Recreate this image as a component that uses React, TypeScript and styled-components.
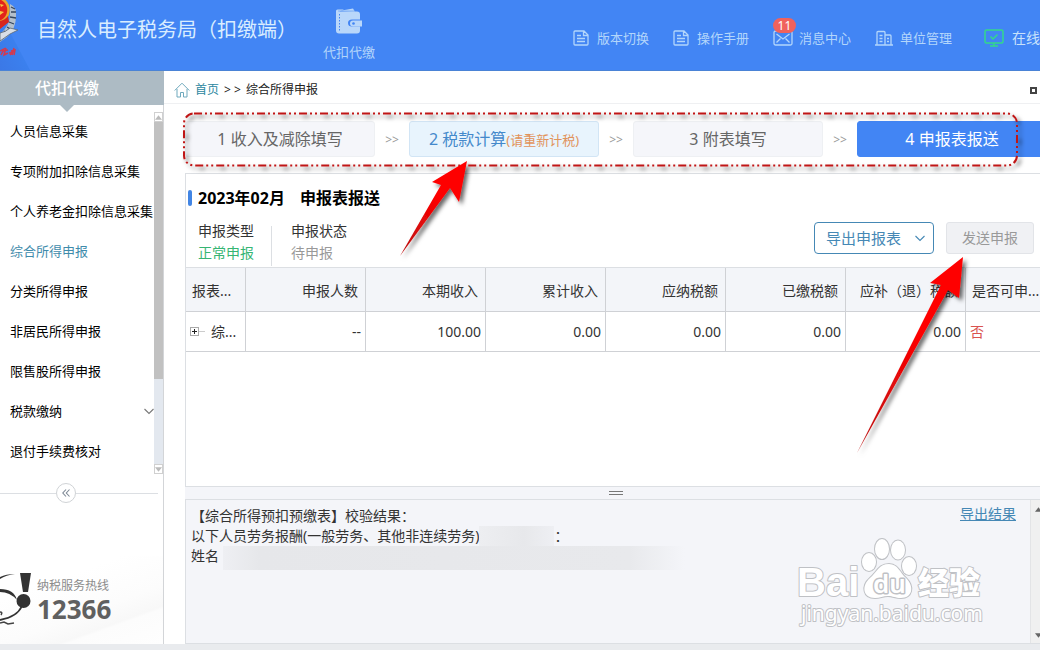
import React from "react";
import styled, { createGlobalStyle } from "styled-components";

const Global = createGlobalStyle`
  * { box-sizing: border-box; }
  body { margin: 0; overflow: hidden; background: #fff; }
  body, button, select {
    font-family: "Noto Sans", "Noto Sans CJK SC", sans-serif;
    font-size: 14px;
    line-height: 20px;
    color: #333;
  }
  ul, ol { list-style: none; margin: 0; padding: 0; }
  h1, h2, h3, p, dl, dd { margin: 0; font-weight: 400; }
  a { text-decoration: none; color: inherit; }
  button { padding: 0; border: 0; background: none; cursor: pointer; }
`;

const Page = styled.div`
  position: relative;
  display: flex;
  flex-direction: column;
  min-height: 100vh;
  overflow: hidden;
`;

/* ---------- top bar ---------- */
const TopBar = styled.header`
  display: flex;
  flex-shrink: 0;
  height: 71px;
  background: linear-gradient(62deg, #3b78e6 0, #3b80ee 26px, #4285f4 27px);
  border-bottom: 1px solid #4a83d6;
  color: #d9edff;
`;
const Emblem = styled.svg`
  width: 37px;
  height: 70px;
  flex-shrink: 0;
`;
const AppTitle = styled.h1`
  width: 273px;
  flex-shrink: 0;
  padding-top: 15px;
  font-size: 20px;
  line-height: 30px;
  white-space: nowrap;
`;
const ModuleTab = styled.button`
  display: flex;
  flex-direction: column;
  align-items: center;
  gap: 8px;
  width: 78px;
  padding-top: 8px;
  font-size: 13px;
  color: #b3d6fb;
`;
const TopLinks = styled.nav`
  display: flex;
  flex: 1;
  justify-content: flex-end;
  gap: 24px;
  padding-top: 28px;
`;
const TopLink = styled.a<{ $gap?: number }>`
  position: relative;
  display: flex;
  align-items: center;
  gap: ${(p) => p.$gap ?? 8}px;
  height: 20px;
  font-size: 13px;
  color: #b3d6fb;
  white-space: nowrap;
  svg { flex-shrink: 0; }
`;
const OnlineLink = styled(TopLink)`
  margin-left: 8px;
  font-size: 14px;
  color: #c8e2fb;
`;
const CountBadge = styled.span`
  position: absolute;
  left: 0;
  top: -10px;
  width: 23px;
  height: 15px;
  border-radius: 8px;
  background: #f0625d;
  color: #fff;
  font-size: 12px;
  line-height: 15px;
  text-align: center;
`;

/* ---------- sidebar ---------- */
const Body = styled.div`
  display: flex;
  flex: 1;
`;
const Sidebar = styled.aside`
  display: flex;
  flex-direction: column;
  flex-shrink: 0;
  width: 164px;
  border-right: 1px solid #d3d5d8;
`;
const SideTitle = styled.h2`
  height: 34px;
  margin-right: -1px;
  padding-right: 30px;
  background: #adbbc4;
  color: #fff;
  font-size: 16px;
  font-weight: 500;
  line-height: 34px;
  text-align: center;
`;
const TitlePointer = styled.div`
  width: 14px;
  height: 7px;
  margin-left: 60px;
  background: #adbbc4;
  clip-path: polygon(0 0, 100% 0, 50% 100%);
`;
const SideScroll = styled.div`
  display: flex;
  height: 362px;
`;
const Menu = styled.ul`
  flex: 1;
  min-width: 0;
`;
const MenuLink = styled.a<{ $active?: boolean }>`
  display: flex;
  align-items: center;
  justify-content: space-between;
  height: 40px;
  padding: 0 0 2px 10px;
  font-size: 13px;
  color: ${(p) => (p.$active ? "#3f8bab" : "#000")};
  white-space: nowrap;
`;
const SideTrack = styled.div`
  display: flex;
  flex-direction: column;
  width: 9px;
  background: #e3e8ef;
`;
const SideThumb = styled.div`
  flex: 0 0 257px;
  background: #c1c1c1;
`;
const TrackEnd = styled.div`
  display: grid;
  place-items: center;
  height: 10px;
  border: 1px solid #d0d0d0;
  background: #fff;
`;
const TrackSpace = styled.div`
  flex: 1;
`;
const CollapseRow = styled.div`
  display: flex;
  align-items: center;
  height: 20px;
  margin: 9px 5px 0 0;
  &::before, &::after {
    content: "";
    height: 1px;
    background: #dcdfe3;
    flex: 1;
  }
  &::before { flex: 0 0 56px; }
`;
const CollapseButton = styled.button`
  display: grid;
  place-items: center;
  width: 20px;
  height: 20px;
  border: 1px solid #d0d3d6;
  border-radius: 50%;
`;
const Hotline = styled.div`
  display: flex;
  align-items: center;
  height: 88px;
  margin-top: auto;
  background: linear-gradient(160deg, #fff 30%, #fcfcfc 60%, #f8f8f8 74%, #fcfcfc 76%, #fefefe);
`;
const HotlineText = styled.p`
  padding: 2px 0 0 6px;
  font-size: 12px;
  line-height: 16px;
  color: #8c8c8c;
`;
const HotlineNumber = styled.strong`
  display: block;
  color: #606060;
  font-size: 26px;
  line-height: 30px;
`;

/* ---------- main area ---------- */
const Main = styled.main`
  display: flex;
  flex-direction: column;
  flex: 1;
  min-width: 0;
`;
const Breadcrumb = styled.nav`
  display: flex;
  align-items: center;
  height: 33px;
  padding: 6px 3px 0 10px;
  border-bottom: 1px solid #eff0f2;
  font-size: 12px;
  color: #222;
  gap: 5px;
`;
const HomeLink = styled.a`
  display: flex;
  align-items: center;
  gap: 5px;
  color: #2b87a0;
`;
const RestoreButton = styled.button`
  width: 7px;
  height: 7px;
  margin-left: auto;
  border: 2px solid #444;
`;
const Steps = styled.ol`
  display: flex;
  height: 36px;
  margin: 17px 0 16px 21px;
`;
const StepItem = styled.li`
  display: flex;
  flex-shrink: 0;
  &:not(:last-child)::after {
    content: ">>";
    width: 34px;
    font-size: 12px;
    line-height: 38px;
    text-align: center;
    color: #999;
  }
`;
const stepTone = {
  plain: "background:#f5f6fa;color:#666;border-color:#eef0f3;",
  warn: "background:#e8f4fd;color:#4489cb;border-color:#d2e5f5;",
  active: "background:#4285f4;color:#fff;border-color:#4285f4;",
};
const StepButton = styled.button<{ $tone: keyof typeof stepTone }>`
  width: 190px;
  height: 36px;
  border: 1px solid;
  border-radius: 3px;
  font-size: 16px;
  white-space: nowrap;
  ${(p) => stepTone[p.$tone]}
`;
const StepHint = styled.span`
  font-size: 13px;
  color: #e1935b;
`;
const Report = styled.section`
  flex: 1;
  margin-left: 21px;
  border: solid #dcdfe3;
  border-width: 1px 0 1px 1px;
`;
const ReportTitle = styled.h2`
  display: flex;
  align-items: center;
  padding: 12px 0 0 2px;
  font-size: 16px;
  font-weight: 700;
  line-height: 24px;
  color: #000;
  &::before {
    content: "";
    width: 4px;
    height: 16px;
    margin-right: 6px;
    border-radius: 2px;
    background: #4285e4;
  }
`;
const ReportName = styled.span`
  margin-left: 15px;
`;
const ReportInfo = styled.div`
  display: flex;
  height: 57px;
  padding: 0 6px 0 12px;
`;
const InfoItem = styled.dl`
  margin: 16px 0 1px;
  padding-right: 17px;
  line-height: 22px;
  & + & {
    padding-left: 19px;
    border-left: 1px solid #dcdfe3;
  }
  dt { margin-top: -6px; }
`;
const InfoValue = styled.dd<{ $ok?: boolean }>`
  color: ${(p) => (p.$ok ? "#36b573" : "#999")};
`;
const Actions = styled.div`
  display: flex;
  gap: 12px;
  margin: 12px 0 0 auto;
  height: 32px;
`;
const SelectWrap = styled.label`
  position: relative;
  svg {
    position: absolute;
    right: 9px;
    top: 13px;
    pointer-events: none;
  }
`;
const ExportSelect = styled.select`
  appearance: none;
  width: 120px;
  height: 32px;
  padding: 0 11px;
  border: 1px solid #4588b5;
  border-radius: 4px;
  background: #fff;
  color: #4588b5;
  font-size: 15px;
`;
const SendButton = styled.button`
  width: 88px;
  height: 32px;
  border: 1px solid #e2e4e8;
  border-radius: 3px;
  background: #f0f1f4;
  color: #999;
`;
const Table = styled.table`
  width: 100%;
  table-layout: fixed;
  border-collapse: separate;
  border-spacing: 0;
  border-top: 1px solid #dcdfe3;
`;
const HeadCell = styled.th<{ $left?: boolean }>`
  height: 44px;
  padding: ${(p) => (p.$left ? "2px 2px 0 6px" : "2px 7px 0 2px")};
  border: solid #cfd1d5;
  border-width: 0 1px 1px 0;
  background: #f3f5f9;
  font-weight: 400;
  text-align: ${(p) => (p.$left ? "left" : "right")};
  white-space: nowrap;
  &:last-child { border-right: 0; }
`;
const Cell = styled.td<{ $left?: boolean }>`
  height: 40px;
  padding: 0 4px;
  border: solid #cfd1d5;
  border-width: 0 1px 1px 0;
  text-align: ${(p) => (p.$left ? "left" : "right")};
  white-space: nowrap;
  &:last-child { border-right: 0; color: #d9534f; }
`;
const Expander = styled.span`
  display: flex;
  align-items: center;
  gap: 6px;
`;
const Splitter = styled.div`
  display: grid;
  place-items: center;
  height: 12px;
  margin-left: 21px;
  padding-left: 6px;
  background: #f4f5f9;
`;
const Grip = styled.span`
  width: 14px;
  height: 4px;
  border: solid #777;
  border-width: 1px 0;
`;
const Results = styled.section`
  position: relative;
  display: flex;
  height: 145px;
  margin-left: 21px;
  border: solid #dcdfe3;
  border-width: 1px 0 1px 1px;
  background: #f4f5f9;
`;
const ResultText = styled.div`
  flex: 1;
  padding: 6px 0 0 5px;
`;
const ResultLine = styled.p`
  display: flex;
  align-items: center;
  height: 20px;
  white-space: nowrap;
`;
const Masked = styled.span<{ $wide?: boolean }>`
  align-self: ${(p) => (p.$wide ? "flex-start" : "flex-end")};
  flex-shrink: 0;
  width: ${(p) => (p.$wide ? 462 : 75)}px;
  height: ${(p) => (p.$wide ? 24 : 20)}px;
  margin-left: ${(p) => (p.$wide ? 4 : 0)}px;
  background: ${(p) =>
    p.$wide
      ? "linear-gradient(90deg, #eeeff3, #e6e7ea 8%, #e8e9ec 88%, #f4f5f9)"
      : "linear-gradient(90deg, #edeef1, #e7e8eb 60%, #eeeff3)"};
`;
const ExportResults = styled.a`
  padding: 4px 14px 0 0;
  color: #4588b5;
  text-decoration: underline;
`;
const ResultTrack = styled.div`
  display: flex;
  flex-direction: column;
  justify-content: space-between;
  width: 10px;
  padding: 7px 0 5px 4px;
  border-left: 1px solid #e3e4e6;
  background: #f0f0f0;
  overflow: hidden;
  svg { flex-shrink: 0; }
`;
const Watermark = styled.svg`
  position: absolute;
  right: 50px;
  bottom: 8px;
  width: 194px;
  height: 98px;
`;
const Footer = styled.footer`
  height: 6px;
  background: #e9ebee;
`;
const Annotations = styled.svg`
  position: absolute;
  left: 0;
  top: 0;
  width: 1040px;
  height: 650px;
  pointer-events: none;
`;

const DocIcon = () => (
  <svg width="16" height="16" viewBox="0 0 16 16" fill="none" stroke="#b3d6fb" strokeWidth="1.3">
    <path d="M2 1h9l4 4v9a1 1 0 0 1-1 1H2a1 1 0 0 1-1-1V2a1 1 0 0 1 1-1zM10.500 1v4.500H15M4 5.500h4M4 8.500h8M4 11.500h8" />
  </svg>
);
const MailIcon = () => (
  <svg width="20" height="16" viewBox="0 0 20 16" fill="none" stroke="#b3d6fb" strokeWidth="1.3">
    <rect x="1" y="1" width="18" height="14" rx="1.500" />
    <path d="M3.500 4 10 9l6.500-5M3.500 12.500 7.500 8.500M16.500 12.500l-4-4" />
  </svg>
);
const BuildingIcon = () => (
  <svg width="18" height="16" viewBox="0 0 18 16" fill="none" stroke="#b3d6fb" strokeWidth="1.300">
    <path d="M0 15h18M2 15V2.500a1 1 0 0 1 1-1h6a1 1 0 0 1 1 1V15M10 5h5a1 1 0 0 1 1 1v9M4.500 5.500h3M4.500 8.500h3M4.500 11.500h3M12 8.500h2M12 11.500h2" />
  </svg>
);
const MonitorIcon = () => (
  <svg width="20" height="18" viewBox="0 0 20 18" fill="none" stroke="#33d98a" strokeWidth="1.500">
    <rect x="1" y="1" width="18" height="13" rx="1.500" />
    <path d="M6.500 7.500 9 10l4.500-4.500M10 14v3M6 17h8" />
  </svg>
);
const WalletIcon = () => (
  <svg width="26" height="26" viewBox="0 0 26 26">
    <path d="M3 3 17 .5 19 4z" fill="#b9d7fa" />
    <path d="M0 3q0-1.500 1.500-1.500H8L3 3.500h18q3 0 3 3v5h-8q-4 0-4 3.500t4 3.500h8v4q0 3-3 3H3q-3 0-3-3z" fill="#b9d7fa" />
    <path d="M17 12.500h9v6h-9q-3 0-3-3t3-3z" fill="#b9d7fa" />
    <circle cx="17.500" cy="15.500" r="1.300" fill="#4285f4" />
    <path d="M3.500 6v18" stroke="#4285f4" strokeDasharray="1.500 1.500" />
    <path d="M2 3h17" stroke="#6fa3f2" strokeWidth=".7" />
  </svg>
);
const Triangle = ({ down, dark }: { down?: boolean; dark?: boolean }) => (
  <svg width="7" height="5" viewBox="0 0 8 5">
    <path d={down ? "M0 0h8L4 5z" : "M0 5h8L4 0z"} fill={dark ? "#666" : "#bbb"} />
  </svg>
);
const Chevron = ({ color }: { color: string }) => (
  <svg width="10" height="7" viewBox="0 0 10 7" fill="none" stroke={color} strokeWidth="1.100">
    <path d="m.5 1 4.500 4.500L9.500 1" />
  </svg>
);

const menu = [
  "人员信息采集",
  "专项附加扣除信息采集",
  "个人养老金扣除信息采集",
  "综合所得申报",
  "分类所得申报",
  "非居民所得申报",
  "限售股所得申报",
  "税款缴纳",
  "退付手续费核对",
];
const columns = ["报表...", "申报人数", "本期收入", "累计收入", "应纳税额", "已缴税额", "应补（退）税额", "是否可申..."];
const values = ["--", "100.00", "0.00", "0.00", "0.00", "0.00"];

export default function App() {
  return (
    <Page>
      <Global />
      <TopBar>
        <Emblem viewBox="0 0 37 70" aria-hidden="true">
          <path d="M10 4q7 3 6 12 0 13-9 21l-7 5v-8q10-8 10-20z" fill="#b4bfcb" />
          <path d="M11 7l4 2M11 12l5 0M10 17l6 1M9 22l5 2M7 27l5 3M4 31l4 4M0 36l3 3" stroke="#34465e" strokeWidth="1.300" />
          <path d="M0 33q6-1 10-5l8 2-8 4-10 7z" fill="#d8dee6" stroke="#5b6775" strokeWidth=".8" />
          <circle cx="-4" cy="10" r="12.500" fill="#e3231b" stroke="#e9a72c" strokeWidth="2.500" />
          <path d="M0 4l4 1-3 2zM0 11l4 1-4 3z" fill="#f7c943" />
          <path d="M0 21q5-1 8-5l1 6-9 7z" fill="#d8271e" />
          <path d="M0 51l4-2-3 6M6 48l-2 7 4-2M3 51l5-1M9 53l4-1-3 3M14 48l-2 7M11 51l4-1-1 5" stroke="#d23a50" strokeWidth="1.500" fill="none" />
        </Emblem>
        <AppTitle>自然人电子税务局（扣缴端）</AppTitle>
        <ModuleTab>
          <WalletIcon />
          代扣代缴
        </ModuleTab>
        <TopLinks>
          <TopLink href="#"><DocIcon />版本切换</TopLink>
          <TopLink href="#"><DocIcon />操作手册</TopLink>
          <TopLink href="#" $gap={6}><MailIcon /><CountBadge>11</CountBadge>消息中心</TopLink>
          <TopLink href="#" $gap={7}><BuildingIcon />单位管理</TopLink>
          <OnlineLink href="#"><MonitorIcon />在线</OnlineLink>
        </TopLinks>
      </TopBar>
      <Body>
        <Sidebar>
          <SideTitle>代扣代缴</SideTitle>
          <TitlePointer />
          <SideScroll>
            <Menu>
              {menu.map((m) => (
                <li key={m}>
                  <MenuLink href="#" $active={m === "综合所得申报"}>
                    {m}
                    {m === "税款缴纳" && <Chevron color="#777" />}
                  </MenuLink>
                </li>
              ))}
            </Menu>
            <SideTrack>
              <TrackEnd><Triangle /></TrackEnd>
              <SideThumb />
              <TrackSpace />
              <TrackEnd><Triangle down /></TrackEnd>
            </SideTrack>
          </SideScroll>
          <CollapseRow>
            <CollapseButton aria-label="收起">
              <svg width="8" height="8" viewBox="0 0 8 8" fill="none" stroke="#7c8794" strokeWidth="1.100">
                <path d="M4 .5.8 4 4 7.500M7.500.5 4.300 4l3.200 3.500" />
              </svg>
            </CollapseButton>
          </CollapseRow>
          <Hotline>
            <svg width="31" height="54" viewBox="0 0 31 54" aria-hidden="true">
              <path d="M20 0h11l-3 19h-5z" fill="#333" />
              <circle cx="23.500" cy="28" r="7" fill="#333" />
              <path d="M0 4Q6 1 15 1 6 2 0 6zM0 16q14 0 17 11-7-8-17-8z" fill="#333" />
              <path d="M22 33q-5 11-22 14" fill="none" stroke="#333" strokeWidth="1.800" />
              <path d="M0 39q3 0 1 3M0 50l4-1 4 2 6-1" fill="none" stroke="#444" strokeWidth="1.500" />
            </svg>
            <HotlineText>
              纳税服务热线
              <HotlineNumber>12366</HotlineNumber>
            </HotlineText>
          </Hotline>
        </Sidebar>
        <Main>
          <Breadcrumb>
            <HomeLink href="#">
              <svg width="16" height="16" viewBox="0 0 16 16" fill="none" stroke="#6fa9bd" strokeWidth="1">
                <path d="M.7 8.500 8 1.200l7.300 7.300M3 7v8h3.500v-4.500h3V15H13V7" />
              </svg>
              首页
            </HomeLink>
            <span>&gt; &gt;</span>
            <span>综合所得申报</span>
            <RestoreButton aria-label="还原" />
          </Breadcrumb>
          <Steps>
            <StepItem><StepButton $tone="plain">1 收入及减除填写</StepButton></StepItem>
            <StepItem>
              <StepButton $tone="warn">2 税款计算<StepHint>(请重新计税)</StepHint></StepButton>
            </StepItem>
            <StepItem><StepButton $tone="plain">3 附表填写</StepButton></StepItem>
            <StepItem><StepButton $tone="active">4 申报表报送</StepButton></StepItem>
          </Steps>
          <Report>
            <ReportTitle>
              2023年02月<ReportName>申报表报送</ReportName>
            </ReportTitle>
            <ReportInfo>
              <InfoItem>
                <dt>申报类型</dt>
                <InfoValue $ok>正常申报</InfoValue>
              </InfoItem>
              <InfoItem>
                <dt>申报状态</dt>
                <InfoValue>待申报</InfoValue>
              </InfoItem>
              <Actions>
                <SelectWrap>
                  <ExportSelect aria-label="导出申报表">
                    <option>导出申报表</option>
                  </ExportSelect>
                  <Chevron color="#4588b5" />
                </SelectWrap>
                <SendButton disabled>发送申报</SendButton>
              </Actions>
            </ReportInfo>
            <Table>
              <colgroup>
                <col style={{ width: 60 }} />
                {values.map((_, i) => <col key={i} style={{ width: 120 }} />)}
                <col />
              </colgroup>
              <thead>
                <tr>
                  {columns.map((c, i) => (
                    <HeadCell key={c} $left={i === 0 || i === 7}>{c}</HeadCell>
                  ))}
                </tr>
              </thead>
              <tbody>
                <tr>
                  <Cell $left>
                    <Expander>
                      <svg width="15" height="9" viewBox="0 0 15 9" fill="none">
                        <rect x=".5" y=".5" width="8" height="8" stroke="#aaa" />
                        <path d="M2 4.500h5M4.500 2v5" stroke="#222" />
                        <path d="M9 4.500h6" stroke="#ccc" />
                      </svg>
                      综...
                    </Expander>
                  </Cell>
                  {values.map((v, i) => <Cell key={i}>{v}</Cell>)}
                  <Cell $left>否</Cell>
                </tr>
              </tbody>
            </Table>
          </Report>
          <Splitter><Grip /></Splitter>
          <Results>
            <ResultText>
              <ResultLine>【综合所得预扣预缴表】校验结果：</ResultLine>
              <ResultLine>以下人员劳务报酬(一般劳务、其他非连续劳务)<Masked />：</ResultLine>
              <ResultLine>姓名<Masked $wide /></ResultLine>
            </ResultText>
            <ExportResults href="#">导出结果</ExportResults>
            <ResultTrack>
              <Triangle dark />
              <Triangle down dark />
            </ResultTrack>
            <Watermark viewBox="0 0 194 98" aria-hidden="true">
              <g fill="#fff" stroke="#bfc1c5" strokeWidth="2" paintOrder="stroke" strokeLinejoin="round">
                <text x="1" y="59" fontFamily="Liberation Sans" fontWeight="700" fontSize="40">Bai</text>
                <ellipse cx="73" cy="25" rx="7" ry="9" />
                <ellipse cx="86" cy="12" rx="7" ry="10" />
                <ellipse cx="102" cy="13" rx="7" ry="9.500" />
                <ellipse cx="113" cy="29" rx="7" ry="9" />
                <path d="M93 27c9 0 11 9 17 14 9 9 6 20-5 20-6 0-8-2-13-2s-8 2-13 2c-12 0-14-12-5-20 7-6 9-14 19-14z" />
                <text x="77" y="56" fontFamily="Noto Sans" fontSize="26" fontWeight="600" strokeWidth="3">du</text>
                <text x="122" y="57" fontFamily="Noto Sans CJK SC" fontWeight="900" fontSize="31">经验</text>
                <text x="5" y="84" fontFamily="Noto Sans" fontSize="21" strokeWidth="2">jingyan.baidu.com</text>
              </g>
            </Watermark>
          </Results>
        </Main>
      </Body>
      <Footer />
      <Annotations viewBox="0 0 1040 650" aria-hidden="true">
        <defs>
          <linearGradient id="arrowFill" x1="1" y1="0" x2="0" y2="1">
            <stop offset="0.4" stopColor="#fe0000" />
            <stop offset="1" stopColor="#b81414" />
          </linearGradient>
          <filter id="cast" x="-20%" y="-20%" width="150%" height="150%">
            <feDropShadow dx="3" dy="3" stdDeviation="2" floodColor="#000" floodOpacity="0.6" />
          </filter>
        </defs>
        <g filter="url(#cast)">
          <rect x="184" y="113.500" width="833" height="52" rx="10" fill="none" stroke="#c01818" strokeWidth="2" strokeDasharray="8 3 2 3 2 3" />
          <path d="M467 161 459 202 450 188 400 256 441 185 432 182z" fill="url(#arrowFill)" />
          <path d="M963 257 959 298 948 290 857 453 941 285 930 283z" fill="url(#arrowFill)" />
        </g>
      </Annotations>
    </Page>
  );
}
